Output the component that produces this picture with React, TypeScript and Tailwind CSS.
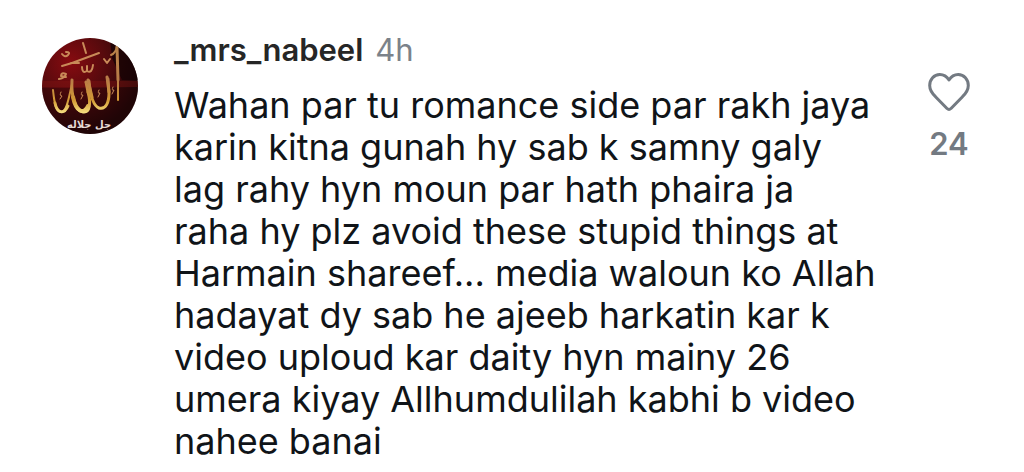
import { useState } from "react";

type Comment = {
  username: string;
  age: string;
  lines: string[];
  likes: number;
};

const comment: Comment = {
  username: "_mrs_nabeel",
  age: "4h",
  lines: [
    "Wahan par tu romance side par rakh jaya",
    "karin kitna gunah hy sab k samny galy",
    "lag rahy hyn moun par hath phaira ja",
    "raha hy plz avoid these stupid things at",
    "Harmain shareef... media waloun ko Allah",
    "hadayat dy sab he ajeeb harkatin kar k",
    "video uploud kar daity hyn mainy 26",
    "umera kiyay Allhumdulilah kabhi b video",
    "nahee banai",
  ],
  likes: 24,
};

function Avatar() {
  return (
    <svg viewBox="0 0 96 96" className="size-24 rounded-full" role="img" aria-label="Profile picture">
      <defs>
        <radialGradient id="backdrop" cx="0.3" cy="0.25" r="0.75">
          <stop offset="0" stopColor="#870b10" />
          <stop offset="0.5" stopColor="#540a0d" />
          <stop offset="1" stopColor="#1d0506" />
        </radialGradient>
        <linearGradient id="gold" x1="0" y1="8" x2="0" y2="76" gradientUnits="userSpaceOnUse">
          <stop offset="0" stopColor="#b98249" />
          <stop offset="0.5" stopColor="#b97c48" />
          <stop offset="0.8" stopColor="#d39a34" />
          <stop offset="1" stopColor="#f8e486" />
        </linearGradient>
      </defs>
      <rect width="96" height="96" fill="url(#backdrop)" />
      <path d="M68 0h28v42H80L70 20z" fill="#140304" opacity="0.75" />
      <path d="M0 43h96v6H0z" fill="#8a1614" opacity="0.35" />
      <path d="M0 50h96v46H0z" fill="#250507" opacity="0.4" />
      <g fill="none" stroke="url(#gold)" strokeLinecap="round" strokeLinejoin="round">
        <path d="M69 17q5-2 6-9" strokeWidth="2" />
        <path d="M75 9l1 33" strokeWidth="3" />
        <path d="M76 42v20" strokeWidth="2" />
        <path d="M11 52c1 9 2 22 8 22 6 0 8-16 11-28" strokeWidth="2" />
        <path d="M13 65c2 10 9 12 13 3" strokeWidth="3" />
        <path d="M30 42c-1 15 3 31 11 32 7 1 8-9 5-20" strokeWidth="3" />
        <path d="M31 59c3 15 11 18 15 9" strokeWidth="4" />
        <path d="M46 54l-2-10" strokeWidth="3" />
        <path d="M47 43c1 12 3 24 10 27 7 2 10-6 10-15l-1-14" strokeWidth="3" />
        <path d="M46 42l4 17M65 39l2 15" strokeWidth="3" />
      </g>
      <g fill="none" stroke="#c98a58" strokeLinecap="round" strokeLinejoin="round">
        <path d="M20 28l10-3 27-10M29 25h8" strokeWidth="2" />
        <path d="M41 5l3 10" strokeWidth="2" />
        <path d="M20 16q3 4 6 1t-2-3M17 41q6-1 7-5-5-2-5 2l5 1" strokeWidth="2" />
        <path d="M40 29q0 7 5 4v-5 5q5 3 6-6" strokeWidth="2" />
        <path d="M62 21l3 4 3-4" strokeWidth="2" />
        <path d="M19 54q-2 4 1 4l-2 3M40 54q-2 4 1 3l-2 4M57 52q-2 4 1 3l-2 4M71 49q-2 4 1 3l-2 4" strokeWidth="1" />
      </g>
      <text
        x="47"
        y="90"
        textAnchor="middle"
        fill="#e6dad6"
        className="font-['DejaVu_Sans'] text-[10px] font-bold"
      >
        جل جلاله
      </text>
    </svg>
  );
}

function LikeButton({ count }: { count: number }) {
  const [liked, setLiked] = useState(false);

  return (
    <button
      type="button"
      aria-label="Like comment"
      aria-pressed={liked}
      onClick={() => setLiked(!liked)}
      className="mt-10 flex w-12 shrink-0 flex-col items-center gap-3 text-[#737a82]"
    >
      <svg viewBox="0 0 44 40" className="h-10 w-11" fill={liked ? "currentColor" : "none"} aria-hidden="true">
        <path
          d="M22 8C19.500 4 16.500 2.500 12.800 2.500 7 2.500 2.700 7.500 2.700 13.500c0 5 2.500 8 5.800 11.200L20 36.500q2 1.800 4 0l11.500-11.800c3.300-3.200 5.800-6.200 5.800-11.200 0-6-4.300-11-10.100-11C27.500 2.500 24.500 4 22 8z"
          stroke="currentColor"
          strokeWidth="3"
          strokeLinejoin="round"
        />
      </svg>
      <span className="text-[31px] leading-10 font-semibold">{count + (liked ? 1 : 0)}</span>
    </button>
  );
}

export default function App() {
  return (
    <main className="min-h-screen bg-white font-['Inter',sans-serif]">
      <article className="flex items-start pt-8 pr-[51px] pl-[42px]">
        <div className="mt-[6px] shrink-0">
          <Avatar />
        </div>
        <div className="ml-9 min-w-0 flex-1">
          <header className="flex items-baseline gap-3 text-[31px] leading-9">
            <a href="#profile" className="font-semibold text-[#262626]">
              {comment.username}
            </a>
            <time className="text-[#7b828a]">{comment.age}</time>
          </header>
          <p className="mt-4 text-[36px] leading-[42px] whitespace-pre-line text-[#101418]">
            {comment.lines.join("\n")}
          </p>
        </div>
        <LikeButton count={comment.likes} />
      </article>
    </main>
  );
}
